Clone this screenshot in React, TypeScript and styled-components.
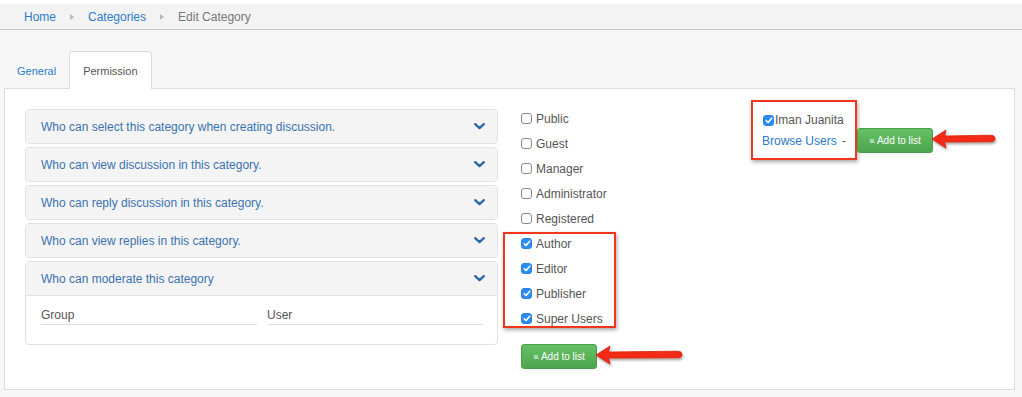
import React from "react";
import styled, { createGlobalStyle } from "styled-components";

const GlobalStyle = createGlobalStyle`
  body {
    margin: 0;
    background: #f7f7f7;
    font-family: "Liberation Sans", Arial, Helvetica, sans-serif;
  }
`;

const Page = styled.div`
  width: 1022px;
  height: 397px;
  box-sizing: border-box;
  background: #f7f7f7;
  border-top: 4px solid #ffffff;
`;

const Breadcrumb = styled.div`
  height: 25px;
  background: #f3f3f3;
  border-bottom: 1px solid #c6c6c6;
  display: flex;
  align-items: center;
  padding-left: 24px;
  font-size: 12px;
  gap: 10px;
`;

const Crumb = styled.span<{ $active?: boolean }>`
  color: ${(p) => (p.$active ? "#777" : "#2b7bca")};
`;

const Sep = styled.span`
  width: 0;
  height: 0;
  border-top: 3.5px solid transparent;
  border-bottom: 3.5px solid transparent;
  border-left: 4px solid #b9b9b9;
  margin: 0 4px;
`;

const Tabs = styled.div`
  display: flex;
  align-items: flex-end;
  margin-top: 20px;
  padding-left: 4px;
  height: 38px;
`;

const Tab = styled.div<{ $active?: boolean }>`
  height: 38px;
  box-sizing: border-box;
  display: flex;
  align-items: center;
  padding: 0 ${(p) => (p.$active ? "13px" : "12px")};
  font-size: 11px;
  color: ${(p) => (p.$active ? "#555" : "#2b7bca")};
  background: ${(p) => (p.$active ? "#fff" : "transparent")};
  border: 1px solid ${(p) => (p.$active ? "#dcdcdc" : "transparent")};
  border-bottom: none;
  border-radius: 4px 4px 0 0;
  position: relative;
  z-index: 1;
  margin-bottom: -1px;
`;

const Panel = styled.div`
  margin: 0 7px 0 4px;
  height: 302px;
  box-sizing: border-box;
  background: #fff;
  border: 1px solid #dcdcdc;
  padding: 20px 20px;
  display: flex;
`;

const Accordion = styled.div`
  width: 473px;
  flex-shrink: 0;
  display: flex;
  flex-direction: column;
  gap: 3px;
`;

const Item = styled.div`
  border: 1px solid #e2e2e2;
  border-radius: 4px;
  background: #fff;
  overflow: hidden;
`;

const Header = styled.div`
  height: 33px;
  background: #f4f4f4;
  display: flex;
  align-items: center;
  justify-content: space-between;
  padding: 0 12px 0 15px;
  font-size: 12px;
  color: #3a73b0;
`;

const Body = styled.div`
  border-top: 1px solid #e2e2e2;
  height: 49px;
  padding: 12px 14px 0 15px;
  box-sizing: border-box;
  display: flex;
  gap: 10px;
`;

const Field = styled.div`
  flex: 1;
  font-size: 12px;
  color: #555;
  border-bottom: 1px solid #dedede;
  height: 16px;
  line-height: 14px;
`;

const Chevron = () => (
  <svg width="11" height="7" viewBox="0 0 11 7">
    <path d="M1.2 1.2 L5.5 5.2 L9.8 1.2" fill="none" stroke="#2f6aa8" strokeWidth="2.4" strokeLinecap="round" strokeLinejoin="round" />
  </svg>
);

const Groups = styled.div`
  width: 230px;
  flex-shrink: 0;
  margin-left: 23px;
  margin-top: -3px;
  display: flex;
  flex-direction: column;
`;

const Row = styled.label`
  height: 25px;
  flex-shrink: 0;
  display: flex;
  align-items: center;
  font-size: 12px;
  color: #555;
`;

const Box = styled.span<{ $checked?: boolean; $gap: number }>`
  width: 11px;
  height: 11px;
  border-radius: 3px;
  box-sizing: border-box;
  margin-right: ${(p) => p.$gap}px;
  display: inline-flex;
  align-items: center;
  justify-content: center;
  flex-shrink: 0;
  background: ${(p) => (p.$checked ? "#2d8cf0" : "#fff")};
  border: 1px solid ${(p) => (p.$checked ? "#2a82e4" : "#8a8a8a")};
`;

const Check = ({ checked, gap = 4 }: { checked?: boolean; gap?: number }) => (
  <Box $checked={checked} $gap={gap}>
    {checked && (
      <svg width="8" height="7" viewBox="0 0 8 7">
        <path d="M1.3 3.8 L3.1 5.5 L6.7 1.3" fill="none" stroke="#fff" strokeWidth="1.6" strokeLinecap="round" strokeLinejoin="round" />
      </svg>
    )}
  </Box>
);

const Highlight = styled.div`
  border: 2px solid #f2361c;
  box-shadow: 1px 2px 4px rgba(0, 0, 0, 0.35);
`;

const GroupHighlight = styled(Highlight)`
  margin-left: -18px;
  width: 113px;
  padding-left: 16px;
  padding-top: 2px;
  margin-top: 1px;
  height: 96px;
  box-sizing: border-box;
  display: flex;
  flex-direction: column;
  justify-content: center;
`;

const ButtonRow = styled.div<{ $top?: number }>`
  display: flex;
  align-items: center;
  margin-top: ${(p) => p.$top ?? 0}px;
`;

const AddButton = styled.button`
  width: 76px;
  height: 25px;
  font-family: inherit;
  font-size: 10px;
  color: #fff;
  border: 1px solid #4a9c4a;
  border-radius: 3px;
  background: linear-gradient(#64c064, #4ea54e);
  padding: 0;
  flex-shrink: 0;
`;

const Arrow = ({ width }: { width: number }) => (
  <svg width={width} height="26" viewBox={`0 0 ${width} 26`} style={{ marginLeft: -3, flexShrink: 0 }}>
    <defs>
      <filter id={`s${width}`} x="-10%" y="-30%" width="130%" height="170%">
        <feDropShadow dx="1" dy="2" stdDeviation="1.3" floodColor="#000" floodOpacity="0.35" />
      </filter>
    </defs>
    <path
      d={`M2 12 L16 3 L14.5 9 L${width - 8} 8.2 Q${width - 4} 8.4 ${width - 4} 11.5 Q${width - 4} 14.6 ${width - 8} 14.8 L14.5 15 L16 21 Z`}
      fill="#f22a12"
      stroke="#d81e08"
      strokeWidth="0.8"
      strokeLinejoin="round"
      filter={`url(#s${width})`}
    />
  </svg>
);

const Users = styled.div`
  margin-top: -9px;
  flex-shrink: 0;
  display: flex;
  align-items: flex-end;
  height: 60px;
`;

const UserHighlight = styled(Highlight)`
  width: 106px;
  height: 60px;
  flex-shrink: 0;
  box-sizing: border-box;
  padding: 10px 0 0 9px;
  font-size: 12px;
`;

const UserLine = styled.div`
  display: flex;
  align-items: center;
  color: #555;
  height: 16px;
  margin-left: 1px;
`;

const BrowseLine = styled.div`
  display: flex;
  justify-content: space-between;
  padding-right: 9px;
  margin-top: 6px;
  color: #555;
`;

const Link = styled.span`
  color: #2b7bca;
`;

const UserButtonRow = styled(ButtonRow)`
  margin-bottom: 7px;
`;

const groups = ["Public", "Guest", "Manager", "Administrator", "Registered"];
const checkedGroups = ["Author", "Editor", "Publisher", "Super Users"];
const titles = [
  "Who can select this category when creating discussion.",
  "Who can view discussion in this category.",
  "Who can reply discussion in this category.",
  "Who can view replies in this category.",
];

export default function App() {
  return (
    <>
      <GlobalStyle />
      <Page>
        <Breadcrumb>
          <Crumb>Home</Crumb>
          <Sep />
          <Crumb>Categories</Crumb>
          <Sep />
          <Crumb $active>Edit Category</Crumb>
        </Breadcrumb>
        <Tabs>
          <Tab>General</Tab>
          <Tab $active>Permission</Tab>
        </Tabs>
        <Panel>
          <Accordion>
            {titles.map((t) => (
              <Item key={t}>
                <Header>
                  {t}
                  <Chevron />
                </Header>
              </Item>
            ))}
            <Item>
              <Header>
                Who can moderate this category
                <Chevron />
              </Header>
              <Body>
                <Field>Group</Field>
                <Field>User</Field>
              </Body>
            </Item>
          </Accordion>
          <Groups>
            {groups.map((g) => (
              <Row key={g}>
                <Check />
                {g}
              </Row>
            ))}
            <GroupHighlight>
              {checkedGroups.map((g) => (
                <Row key={g}>
                  <Check checked />
                  {g}
                </Row>
              ))}
            </GroupHighlight>
            <ButtonRow $top={15}>
              <AddButton>« Add to list</AddButton>
              <Arrow width={92} />
            </ButtonRow>
          </Groups>
          <Users>
            <UserHighlight>
              <UserLine>
                <Check checked gap={1} />
                Iman Juanita
              </UserLine>
              <BrowseLine>
                <Link>Browse Users</Link>
                <span>-</span>
              </BrowseLine>
            </UserHighlight>
            <UserButtonRow>
              <AddButton>« Add to list</AddButton>
              <Arrow width={69} />
            </UserButtonRow>
          </Users>
        </Panel>
      </Page>
    </>
  );
}
